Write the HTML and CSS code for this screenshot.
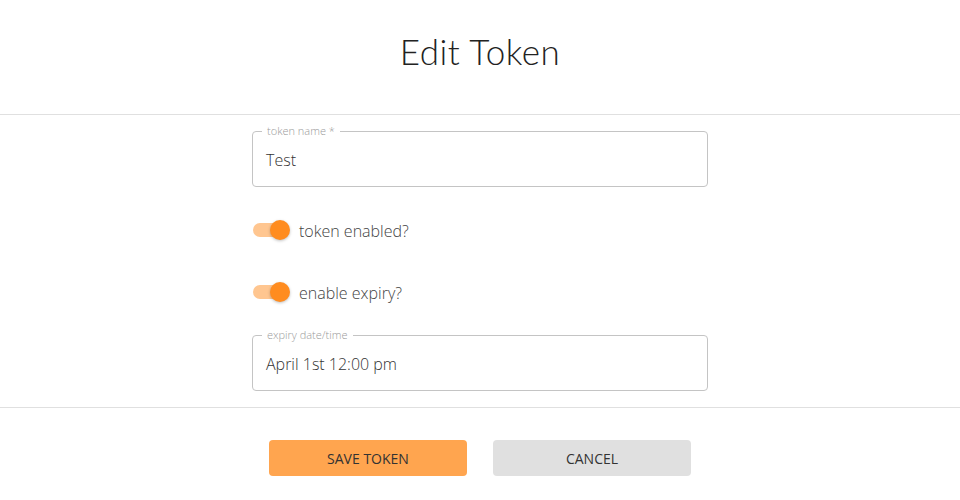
FILE: index.html
```html
<!DOCTYPE html>
<html>
<head>
<meta charset="utf-8">
<link rel="stylesheet" href="styles.css">
</head>
<body>
<div class="dialog">
  <header class="head"><h1 class="title">Edit Token</h1></header>
  <main class="content">
    <div class="form">
      <div class="field">
        <span class="field-label">token name *</span>
        <span class="field-value">Test</span>
      </div>
      <div class="switch-row">
        <span class="switch"><span class="track"></span><span class="thumb"></span></span>
        <span class="switch-label">token enabled?</span>
      </div>
      <div class="switch-row">
        <span class="switch"><span class="track"></span><span class="thumb"></span></span>
        <span class="switch-label">enable expiry?</span>
      </div>
      <div class="field">
        <span class="field-label">expiry date/time</span>
        <span class="field-value">April 1st 12:00 pm</span>
      </div>
    </div>
  </main>
  <footer class="actions">
    <button class="btn btn-primary">SAVE TOKEN</button>
    <button class="btn btn-secondary">CANCEL</button>
  </footer>
</div>
</body>
</html>
```
FILE: styles.css
```css
html, body {
  margin: 0;
  padding: 0;
  background: #fff;
}
body {
  font-family: "Open Sans", "Lato", sans-serif;
  font-weight: 300;
  color: #333;
  width: 960px;
  height: 500px;
  overflow: hidden;
}
.head {
  height: 115px;
  box-sizing: border-box;
  padding-bottom: 12px;
  display: flex;
  align-items: center;
  justify-content: center;
  border-bottom: 1px solid #e0e0e0;
}
.title {
  margin: 0;
  font-family: "Lato", sans-serif;
  font-size: 35px;
  font-weight: 300;
  color: #222;
  letter-spacing: 0.5px;
}
.content {
  padding: 16px 0 16px;
  border-bottom: 1px solid #e0e0e0;
  display: flex;
  justify-content: center;
}
.form {
  width: 456px;
  display: flex;
  flex-direction: column;
}
.field {
  position: relative;
  height: 54px;
  border: 1px solid #c4c4c4;
  border-radius: 4px;
  display: flex;
  align-items: center;
  padding: 0 13px;
}
.field-label {
  position: absolute;
  top: -8px;
  left: 9px;
  padding: 0 5px;
  background: #fff;
  font-size: 11px;
  color: #9a9a9a;
  line-height: 14px;
}
.field-value {
  font-size: 16px;
  color: #333;
  padding-top: 2px;
}
.switch-row {
  display: flex;
  align-items: center;
  height: 24px;
  margin-top: 31px;
}
.switch-row + .switch-row {
  margin-top: 38px;
}
.switch-row + .field {
  margin-top: 31px;
}
.switch {
  position: relative;
  width: 38px;
  height: 20px;
  display: flex;
  align-items: center;
}
.track {
  width: 36px;
  height: 14px;
  margin-left: 1px;
  border-radius: 7px;
  background: #ffc690;
}
.thumb {
  position: absolute;
  left: 18px;
  top: 0;
  width: 20px;
  height: 20px;
  border-radius: 50%;
  background: #ff8c1f;
  box-shadow: 0 1px 3px rgba(0,0,0,0.25);
}
.switch-label {
  margin-left: 9px;
  font-size: 16px;
  color: #444;
  padding-top: 1px;
}
.actions {
  display: flex;
  justify-content: center;
  gap: 26px;
  padding-top: 32px;
}
.btn {
  width: 198px;
  height: 36px;
  border: none;
  border-radius: 4px;
  font-family: "Open Sans", sans-serif;
  font-weight: 400;
  font-size: 14px;
  color: #333;
}
.btn-primary {
  background: #ffa54f;
}
.btn-secondary {
  background: #e0e0e0;
}
```
